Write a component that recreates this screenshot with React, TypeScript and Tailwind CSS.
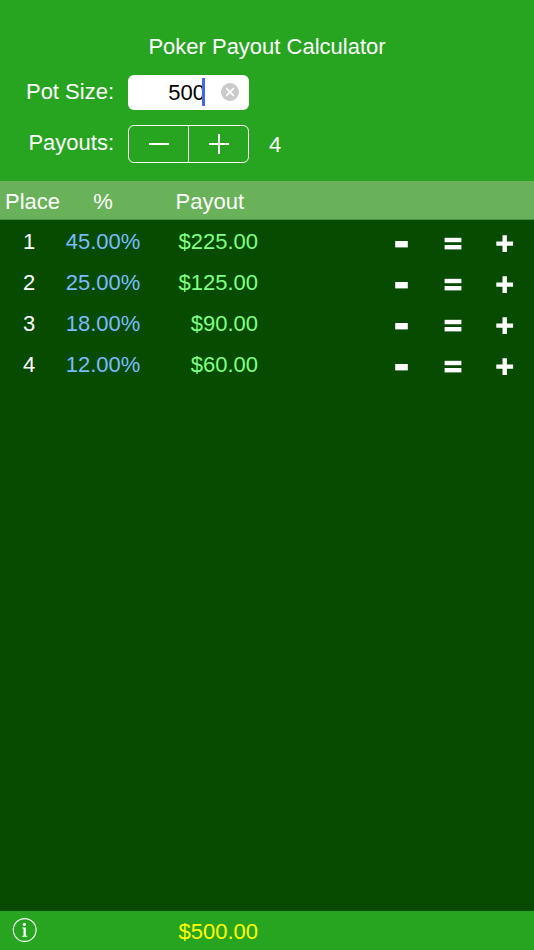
import { useState } from "react";

const FONT = "font-['Liberation_Sans',Arial,sans-serif]";

const SHARES: Record<number, number[]> = {
  1: [100],
  2: [65, 35],
  3: [50, 30, 20],
  4: [45, 25, 18, 12],
  5: [40, 24, 16, 12, 8],
};

const money = (n: number) => `$${n.toFixed(2)}`;

// Round each prize to a multiple of five, first place takes what is left.
function split(pot: number, shares: number[]) {
  const prizes = shares.map((s) => Math.round((pot * s) / 500) * 5);
  const rest = prizes.slice(1).reduce((a, b) => a + b, 0);
  return [pot - rest, ...prizes.slice(1)];
}

function MinusGlyph() {
  return (
    <svg viewBox="0 0 18 18" className="h-[18px] w-[18px] fill-white" aria-hidden="true">
      <rect x="3.2" y="6" width="12.6" height="6.4" />
    </svg>
  );
}

function EqualsGlyph() {
  return (
    <svg viewBox="0 0 18 18" className="h-[18px] w-[18px] fill-white" aria-hidden="true">
      <rect x="0.6" y="2.8" width="16.8" height="4.4" />
      <rect x="0.6" y="10" width="16.8" height="4.4" />
    </svg>
  );
}

function PlusGlyph() {
  return (
    <svg viewBox="0 0 18 18" className="h-[18px] w-[18px] fill-white" aria-hidden="true">
      <path d="M6.5.2h4.4v6.2h6.2v4.4h-6.2V17H6.5v-6.2H.3V6.4h6.2z" />
    </svg>
  );
}

function InfoIcon() {
  return (
    <svg viewBox="0 0 26 26" className="h-[26px] w-[26px]" fill="none" aria-hidden="true">
      <circle cx="12.7" cy="13" r="11.4" stroke="white" strokeWidth="1.1" />
      <circle cx="12.4" cy="7.4" r="1.6" fill="white" />
      <path d="M10.2 10.6h3.6v8.2h1.4v.9h-5v-.9h1.3v-7.3h-1.3z" fill="white" />
    </svg>
  );
}

export default function App() {
  const [pot, setPot] = useState("500");
  const [places, setPlaces] = useState(4);
  const [shares, setShares] = useState(SHARES[4]);

  const total = Number(pot) || 0;
  const prizes = split(total, shares);

  const changePlaces = (n: number) => {
    if (!SHARES[n]) return;
    setPlaces(n);
    setShares(SHARES[n]);
  };

  const nudge = (i: number, by: number) =>
    setShares(shares.map((s, j) => (j === i ? Math.max(0, s + by) : s)));

  return (
    <div className={`flex min-h-screen flex-col bg-[#064b00] text-[22px] leading-7 text-white ${FONT}`}>
      <header className="bg-[#27a521] pt-[33px] pb-[18px]">
        <h1 className="text-center">Poker Payout Calculator</h1>
        <div className="mt-[14px] flex items-center">
          <label htmlFor="pot" className="w-32 pr-[14px] pb-[2px] text-right">
            Pot Size:
          </label>
          <div className="relative">
            <input
              id="pot"
              inputMode="decimal"
              value={pot}
              onChange={(e) => setPot(e.target.value)}
              className="block h-[35px] w-[121px] rounded-md bg-white pr-11 text-right text-black caret-transparent outline-none"
            />
            <span className="pointer-events-none absolute top-[3px] right-11 h-7 w-[3px] bg-[#4169e8]" />
            <button
              type="button"
              aria-label="Clear pot size"
              onClick={() => setPot("")}
              className="absolute top-2 right-[10px]"
            >
              <svg viewBox="0 0 18 18" className="h-[18px] w-[18px]" aria-hidden="true">
                <circle cx="9" cy="9" r="9" fill="#cacaca" />
                <path d="M5.2 5.2l7.6 7.6M12.8 5.2l-7.6 7.6" stroke="white" strokeWidth="1.8" />
              </svg>
            </button>
          </div>
        </div>
        <div className="mt-[15px] flex items-center">
          <span className="w-32 pr-[14px] pb-[2px] text-right">Payouts:</span>
          <div className="flex h-[38px] w-[121px] rounded-md border border-white">
            <button
              type="button"
              aria-label="Fewer payouts"
              onClick={() => changePlaces(places - 1)}
              className="flex flex-1 items-center justify-center border-r border-white"
            >
              <svg viewBox="0 0 20 20" className="h-5 w-5" stroke="white" strokeWidth="2" aria-hidden="true">
                <path d="M0 10h20" />
              </svg>
            </button>
            <button
              type="button"
              aria-label="More payouts"
              onClick={() => changePlaces(places + 1)}
              className="flex flex-1 items-center justify-center"
            >
              <svg viewBox="0 0 20 20" className="h-5 w-5" stroke="white" strokeWidth="2" aria-hidden="true">
                <path d="M0 10h20M10 0v20" />
              </svg>
            </button>
          </div>
          <output className="ml-5 pt-[2px]">{places}</output>
        </div>
      </header>

      <main className="flex-1">
        <table className="w-full table-fixed">
          <colgroup>
            <col className="w-[58px]" />
            <col className="w-[90px]" />
            <col className="w-[110px]" />
            <col />
          </colgroup>
          <thead>
            <tr className="h-[38px] border-b border-[#4c943f] bg-[#69b259]">
              <th className="pt-1 pl-[5px] text-left font-normal whitespace-nowrap">Place</th>
              <th className="pt-1 font-normal">%</th>
              <th className="pt-1 pr-[14px] text-right font-normal">Payout</th>
              <td />
            </tr>
          </thead>
          <tbody>
            {shares.map((share, i) => (
              <tr key={i} className="h-[41px]">
                <td className="pt-1 text-center">{i + 1}</td>
                <td className="pt-1 text-center text-[#7abaff]">{share.toFixed(2)}%</td>
                <td className="pt-1 text-right text-[#80ff80]">{money(prizes[i])}</td>
                <td>
                  <div className="flex justify-end pt-2 pr-[3px]">
                    <button
                      type="button"
                      aria-label={`Lower place ${i + 1}`}
                      onClick={() => nudge(i, -1)}
                      className="flex w-[52px] justify-center"
                    >
                      <MinusGlyph />
                    </button>
                    <button
                      type="button"
                      aria-label={`Reset place ${i + 1}`}
                      onClick={() => nudge(i, SHARES[places][i] - share)}
                      className="flex w-[52px] justify-center"
                    >
                      <EqualsGlyph />
                    </button>
                    <button
                      type="button"
                      aria-label={`Raise place ${i + 1}`}
                      onClick={() => nudge(i, 1)}
                      className="flex w-[52px] justify-center"
                    >
                      <PlusGlyph />
                    </button>
                  </div>
                </td>
              </tr>
            ))}
          </tbody>
        </table>
      </main>

      <footer className="flex h-[39px] items-center bg-[#27a521]">
        <button type="button" aria-label="About" className="ml-3 pb-[2px]">
          <InfoIcon />
        </button>
        <span className="w-[220px] pt-[2px] text-right text-[#ffff00]">{money(total)}</span>
      </footer>
    </div>
  );
}
